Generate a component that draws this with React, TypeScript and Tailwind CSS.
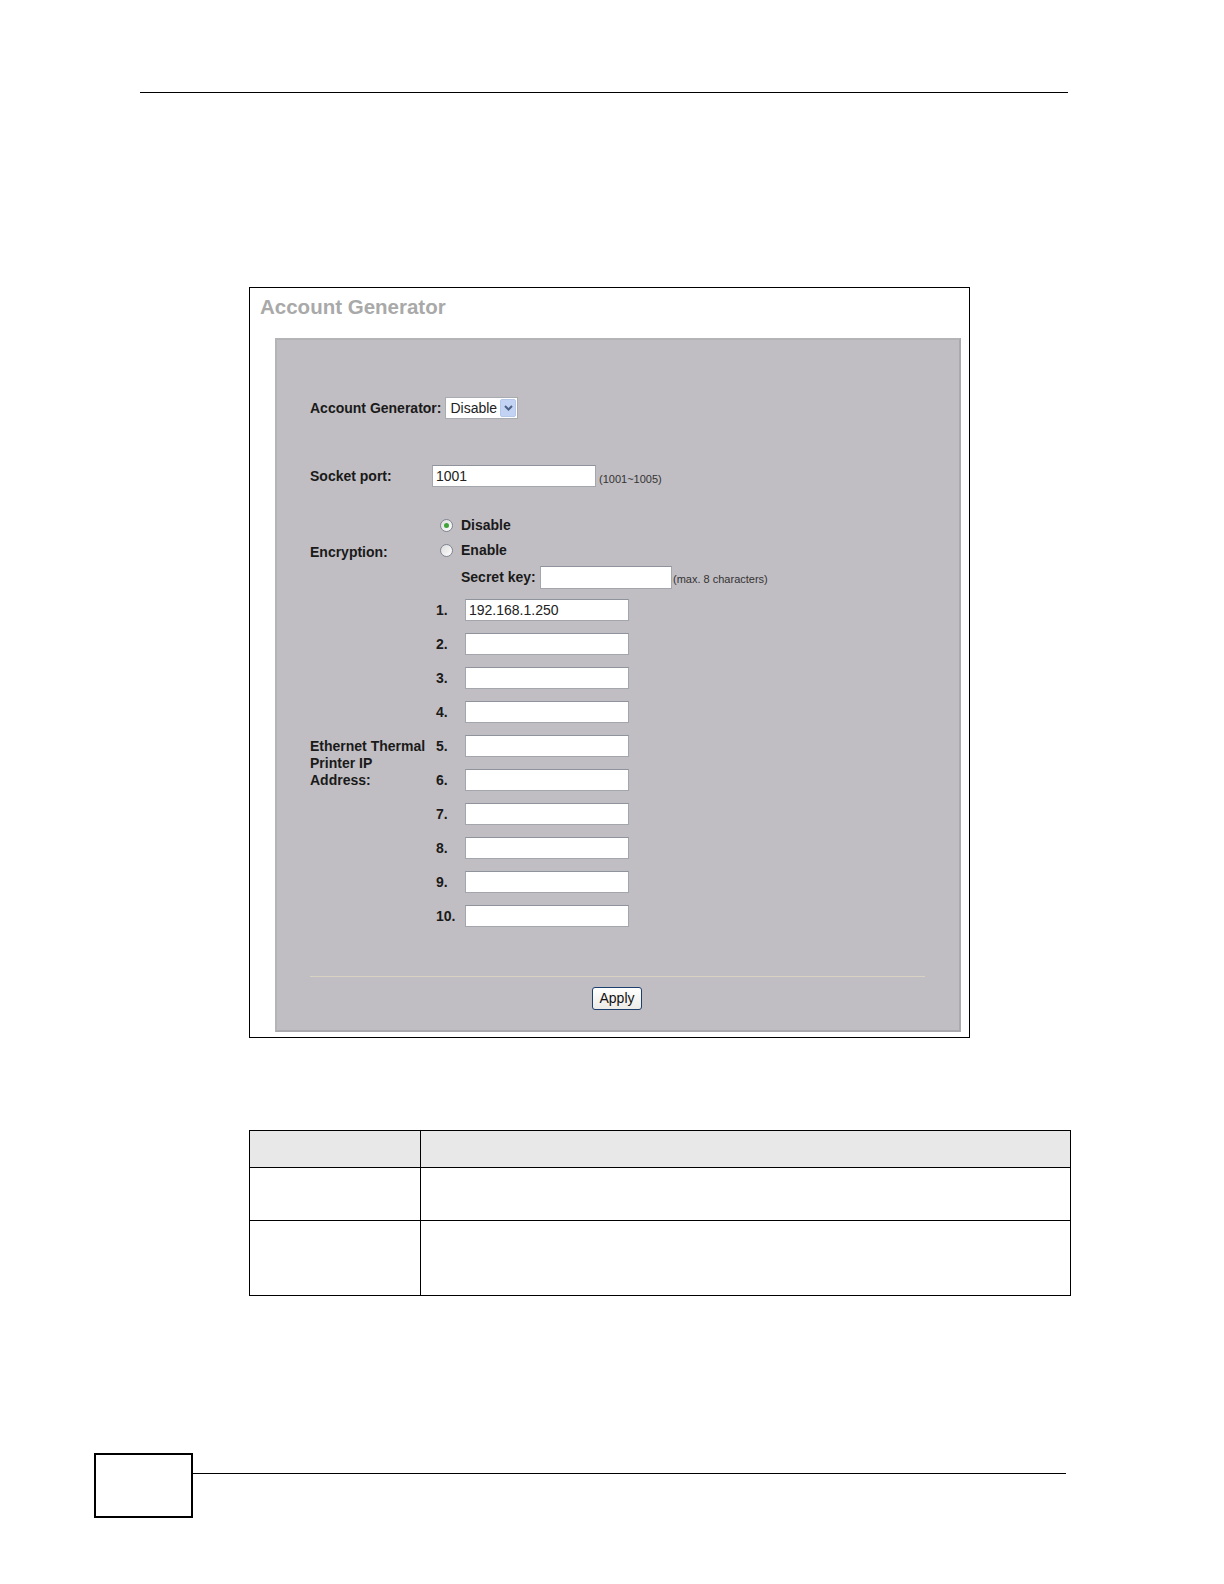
import React from "react";

const font = { fontFamily: '"Liberation Sans", Arial, sans-serif' };

function TextInput({ w, value }: { w: string; value?: string }) {
  return (
    <div
      className={`${w} h-[22px] bg-white border border-[#a3a6ad] border-t-[#8f939b] flex items-center pl-[3px] text-[14px] leading-none text-[#222]`}
    >
      {value}
    </div>
  );
}

function Radio({ checked }: { checked?: boolean }) {
  return (
    <div className="w-[13px] h-[13px] rounded-full border border-[#7e8590] bg-gradient-to-br from-[#dcdcdc] to-white flex items-center justify-center">
      {checked && <div className="w-[5px] h-[5px] rounded-full bg-[#3fa33a]" />}
    </div>
  );
}

export default function App() {
  const ips = ["192.168.1.250", "", "", "", "", "", "", "", "", ""];
  return (
    <div className="w-full h-[1584px] bg-white relative overflow-hidden" style={font}>
      <div className="pt-[92px]">
        <div className="ml-[140px] w-[928px] h-px bg-black" />
      </div>

      {/* screenshot */}
      <div className="ml-[249px] mt-[194px] w-[721px] h-[751px] border border-black flex flex-col">
        <div className="h-[50px] pl-[10px] pt-[7px] text-[20.5px] font-bold text-[#a9a9a9] leading-[24px]">
          Account Generator
        </div>
        <div className="ml-[25px] w-[686px] h-[694px] bg-[#c1bec3] border-2 border-[#aaa9ad] border-l-[#b4b3b6] border-t-[#b4b3b6] flex flex-col text-[14px] text-[#1a1a1a]">
          {/* Account generator */}
          <div className="mt-[57px] h-[22px] flex items-center pl-[33px]">
            <span className="font-bold">Account Generator:</span>
            <div className="ml-[4px] w-[73px] h-[22px] bg-white border border-[#a8abb0] flex items-center">
              <span className="pl-[4px] flex-1 text-[14px] text-[#222]">Disable</span>
              <div className="w-[16px] h-[18px] mr-[1px] bg-[#c3d3f3] border border-[#b5c7ea] rounded-[2px] flex items-center justify-center">
                <svg width="9" height="6" viewBox="0 0 9 6">
                  <path d="M1 1 L4.5 4.5 L8 1" stroke="#4d6185" strokeWidth="2" fill="none" />
                </svg>
              </div>
            </div>
          </div>

          {/* Socket port */}
          <div className="mt-[46px] h-[22px] flex items-center pl-[33px]">
            <span className="font-bold w-[122px]">Socket port:</span>
            <TextInput w="w-[164px]" value="1001" />
            <span className="ml-[3px] mt-[6px] text-[11px] text-[#333]">(1001~1005)</span>
          </div>

          {/* Encryption */}
          <div className="mt-[28px] flex items-center pl-[33px]">
            <span className="font-bold w-[122px]">Encryption:</span>
            <div className="flex flex-col">
              <div className="h-[20px] flex items-center pl-[8px]">
                <Radio checked />
                <span className="ml-[8px] font-bold">Disable</span>
              </div>
              <div className="mt-[5px] h-[20px] flex items-center pl-[8px]">
                <Radio />
                <span className="ml-[8px] font-bold">Enable</span>
              </div>
              <div className="mt-[6px] h-[23px] flex items-center pl-[29px]">
                <span className="font-bold w-[79px]">Secret key:</span>
                <TextInput w="w-[132px] h-[23px]" />
                <span className="ml-[1px] mt-[4px] text-[11px] text-[#333]">(max. 8 characters)</span>
              </div>
            </div>
          </div>

          {/* IP addresses */}
          <div className="mt-[10px] flex items-center pl-[33px]">
            <div className="w-[122px] font-bold leading-[17px]">
              Ethernet Thermal
              <br />
              Printer IP
              <br />
              Address:
            </div>
            <div className="flex flex-col gap-[12px]">
              {ips.map((ip, i) => (
                <div key={i} className="h-[22px] flex items-center">
                  <span className="w-[33px] pl-[4px] font-bold">{i + 1}.</span>
                  <TextInput w="w-[164px]" value={ip} />
                </div>
              ))}
            </div>
          </div>

          {/* separator */}
          <div className="mt-[49px] ml-[33px] w-[615px] h-px bg-[#d8d2c2]" />
          <div className="mt-[10px] flex justify-center pr-[2px]">
            <div className="w-[50px] h-[23px] rounded-[3px] border border-[#1d3f6e] bg-gradient-to-b from-white to-[#ecebe6] flex items-center justify-center text-[14px] text-[#111]">
              Apply
            </div>
          </div>
        </div>
      </div>

      {/* table */}
      <div className="ml-[249px] mt-[92px] w-[822px] border border-black">
        <div className="flex h-[37px] bg-[#e8e8e8] border-b border-black">
          <div className="w-[171px] border-r border-black" />
          <div className="flex-1" />
        </div>
        <div className="flex h-[53px] border-b border-black">
          <div className="w-[171px] border-r border-black" />
          <div className="flex-1" />
        </div>
        <div className="flex h-[74px]">
          <div className="w-[171px] border-r border-black" />
          <div className="flex-1" />
        </div>
      </div>

      {/* footer */}
      <div className="absolute left-[94px] top-[1453px] w-[99px] h-[65px] border-2 border-black" />
      <div className="absolute left-[193px] top-[1473px] w-[873px] h-px bg-black" />
    </div>
  );
}
